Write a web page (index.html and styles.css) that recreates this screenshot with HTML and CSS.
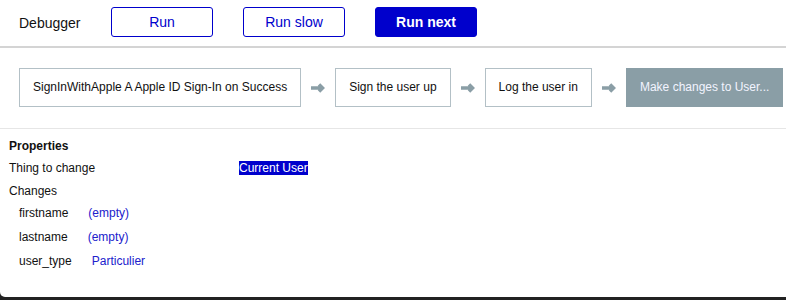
FILE: index.html
```html
<!DOCTYPE html>
<html lang="en">
<head>
  <meta charset="UTF-8">
  <title>Debugger</title>
  <link rel="stylesheet" href="styles.css">
</head>
<body>
<div class="panel">
  <div class="toolbar">
    <span class="title">Debugger</span>
    <button class="btn">Run</button>
    <button class="btn">Run slow</button>
    <button class="btn primary">Run next</button>
  </div>
  <div class="steps">
    <div class="step">SignInWithApple A Apple ID Sign-In on Success</div>
    <svg class="arrow" viewBox="0 0 14 10"><path d="M0 5h11M8 1.5l3.5 3.5L8 8.5" fill="none" stroke="#8a9ea6" stroke-width="3.5"/></svg>
    <div class="step">Sign the user up</div>
    <svg class="arrow" viewBox="0 0 14 10"><path d="M0 5h11M8 1.5l3.5 3.5L8 8.5" fill="none" stroke="#8a9ea6" stroke-width="3.5"/></svg>
    <div class="step">Log the user in</div>
    <svg class="arrow" viewBox="0 0 14 10"><path d="M0 5h11M8 1.5l3.5 3.5L8 8.5" fill="none" stroke="#8a9ea6" stroke-width="3.5"/></svg>
    <div class="step current">Make changes to User...</div>
  </div>
  <div class="props">
    <div class="props-title">Properties</div>
    <div class="prop-row">
      <span class="prop-label">Thing to change</span>
      <span class="highlight">Current User</span>
    </div>
    <div class="prop-head">Changes</div>
    <div class="change"><span>firstname</span><span class="val">(empty)</span></div>
    <div class="change"><span>lastname</span><span class="val">(empty)</span></div>
    <div class="change"><span>user_type</span><span class="val">Particulier</span></div>
  </div>
</div>
</body>
</html>
```

FILE: styles.css
```css
body {
  margin: 0;
  background: #222;
  font-family: "Liberation Sans", Arial, sans-serif;
  color: #111;
  overflow: hidden;
}
.panel {
  background: #fff;
  height: 297px;
  border-bottom-left-radius: 5px;
  overflow: hidden;
}
.toolbar {
  display: flex;
  align-items: center;
  height: 46px;
  padding-left: 19px;
  border-bottom: 2px solid #d4d4d4;
}
.title {
  font-size: 14px;
  width: 92px;
}
.btn {
  width: 102px;
  height: 30px;
  margin-right: 30px;
  background: #fff;
  border: 1px solid #0000cc;
  border-radius: 3px;
  color: #0000cc;
  font-family: inherit;
  font-size: 14px;
  padding: 0;
  margin-top: -2px;
}
.btn.primary {
  background: #0000cc;
  color: #fff;
  font-weight: bold;
}
.steps {
  display: flex;
  align-items: center;
  margin-top: 20px;
  padding-left: 19px;
  height: 39px;
  white-space: nowrap;
  border-bottom: 1px solid #e6e6e6;
  padding-bottom: 21px;
}
.step {
  height: 37px;
  line-height: 37px;
  padding: 0 13px;
  border: 1px solid #b3c0c6;
  font-size: 12px;
  flex-shrink: 0;
}
.step.current {
  background: #8a9ea6;
  border-color: #8a9ea6;
  color: #f2f4ff;
}
.arrow {
  width: 14px;
  height: 10px;
  margin: 0 10px;
  flex-shrink: 0;
}
.props {
  padding: 9px 9px 0 9px;
  font-size: 12px;
}
.props-title {
  font-weight: bold;
  line-height: 16px;
}
.prop-row {
  display: flex;
  margin-top: 7px;
  line-height: 14px;
}
.prop-label {
  width: 230px;
}
.highlight {
  background: #0000cc;
  color: #fff;
}
.prop-head {
  margin-top: 9px;
  line-height: 14px;
}
.change {
  display: flex;
  gap: 20px;
  padding-left: 10px;
  margin-top: 9px;
  line-height: 15px;
}
.prop-head + .change {
  margin-top: 8px;
}
.val {
  color: #2020cc;
}
```
